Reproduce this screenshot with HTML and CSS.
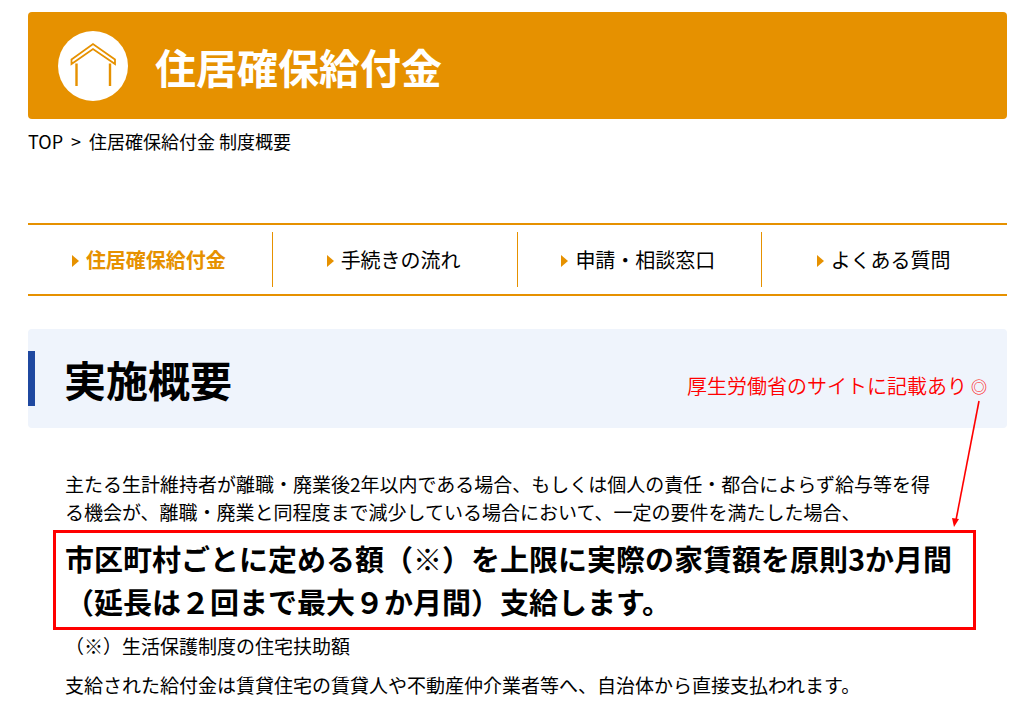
FILE: index.html
```html
<!DOCTYPE html>
<html lang="ja">
<head>
<meta charset="utf-8">
<meta name="viewport" content="width=device-width, initial-scale=1">
<title>住居確保給付金 制度概要</title>
<link rel="stylesheet" href="styles.css">
</head>
<body>
<div class="page">
  <header class="banner">
    <svg class="banner-icon" viewBox="0 0 70 70" aria-hidden="true">
      <circle cx="35" cy="35" r="35" fill="#fff"/>
      <g fill="none" stroke="#e69100">
        <path d="M13.5 28.5 35 13 57 28.5V33L35 18 13.5 33Z" stroke-width="1.8"/>
        <path d="M18.5 32.5V55M52 32.5V55" stroke-width="2.4"/>
      </g>
    </svg>
    <h1 class="banner-title">住居確保給付金</h1>
  </header>

  <nav class="breadcrumb" aria-label="パンくずリスト">
    <a href="#top">TOP</a><span>&gt;</span><span>住居確保給付金 制度概要</span>
  </nav>

  <nav class="tabs" aria-label="メニュー">
    <a class="tab tab-current" href="#about" aria-current="page">住居確保給付金</a>
    <a class="tab" href="#flow">手続きの流れ</a>
    <a class="tab" href="#contact">申請・相談窓口</a>
    <a class="tab" href="#faq">よくある質問</a>
  </nav>

  <main>
    <div class="section-head">
      <h2 class="section-title">実施概要</h2>
      <p class="callout">厚生労働省のサイトに記載あり<span class="callout-mark">◎</span>
        <svg class="callout-arrow" viewBox="0 0 30 130" aria-hidden="true">
          <path d="M27 1 4 120" fill="none" stroke="#f00" stroke-width="1.6"/>
          <path d="M0 118 7 119 2 127Z" fill="#f00"/>
        </svg>
      </p>
    </div>
    <div class="content">
      <p class="text">主たる生計維持者が離職・廃業後2年以内である場合、もしくは個人の責任・都合によらず給与等を得<br>る機会が、離職・廃業と同程度まで減少している場合において、一定の要件を満たした場合、</p>
      <p class="highlight">市区町村ごとに定める額（※）を上限に実際の家賃額を原則3か月間<br>（延長は２回まで最大９か月間）支給します。</p>
      <p class="text">（※）生活保護制度の住宅扶助額</p>
      <p class="text text-last">支給された給付金は賃貸住宅の賃貸人や不動産仲介業者等へ、自治体から直接支払われます。</p>
    </div>
  </main>
</div>
</body>
</html>
```
FILE: styles.css
```css
* {
  box-sizing: border-box;
}

body {
  margin: 0;
  background: #fff;
  color: #000;
  font-family: "Noto Sans CJK JP", sans-serif;
  text-spacing-trim: space-all;
}

h1, h2, p {
  margin: 0;
}

a {
  color: inherit;
  text-decoration: none;
}

.page {
  padding: 12px 17px 24px 28px;
}

.banner {
  display: flex;
  align-items: center;
  gap: 27px;
  min-height: 107px;
  padding: 18px 30px;
  border-radius: 4px;
  background: #e69100;
}

.banner-icon {
  flex: none;
  width: 70px;
  height: 70px;
}

.banner-title {
  color: #fff;
  font-size: 41px;
  line-height: 60px;
}

.breadcrumb {
  display: flex;
  gap: 8px;
  margin-top: 9px;
  font-size: 18px;
  line-height: 26px;
}

.tabs {
  display: grid;
  grid-template-columns: repeat(4, 1fr);
  margin-top: 69px;
  padding: 7px 0;
  border-top: 2px solid #e69100;
  border-bottom: 2px solid #e69100;
}

.tab {
  display: flex;
  align-items: center;
  justify-content: center;
  gap: 7px;
  height: 55px;
  padding-right: 2px;
  font-size: 20px;
  line-height: 28px;
}

.tab:not(:last-child) {
  border-right: 1px solid #e69100;
}

.tab::before {
  content: "";
  margin-top: 2px;
  border: 6px solid transparent;
  border-left: 7px solid #e69100;
  border-right: 0;
}

.tab-current {
  color: #e69100;
  font-weight: 700;
}

.section-head {
  display: flex;
  align-items: center;
  justify-content: space-between;
  margin-top: 33px;
  padding: 22px 20px 22px 0;
  border-radius: 4px;
  background: #eff4fc;
}

.section-title {
  padding-left: 29px;
  border-left: 7px solid #1f48a0;
  font-size: 42px;
  line-height: 55px;
}

.callout {
  position: relative;
  display: flex;
  align-items: center;
  gap: 4px;
  margin-top: 14px;
  color: #f00;
  font-size: 20px;
  font-weight: 350;
  line-height: 28px;
}

.callout-mark {
  font-size: 16px;
}

.callout-arrow {
  position: absolute;
  top: 100%;
  right: 5px;
  width: 30px;
  height: 130px;
}

.content {
  margin-top: 42px;
  padding: 0 31px 0 25px;
}

.text {
  padding-left: 12px;
  font-size: 19px;
  line-height: 28px;
}

.text-last {
  margin-top: 11px;
}

.highlight {
  margin: 4px 0 2px;
  padding: 4px 9px;
  border: 3px solid #f00;
  font-size: 29px;
  font-weight: 700;
  line-height: 43px;
}
```
